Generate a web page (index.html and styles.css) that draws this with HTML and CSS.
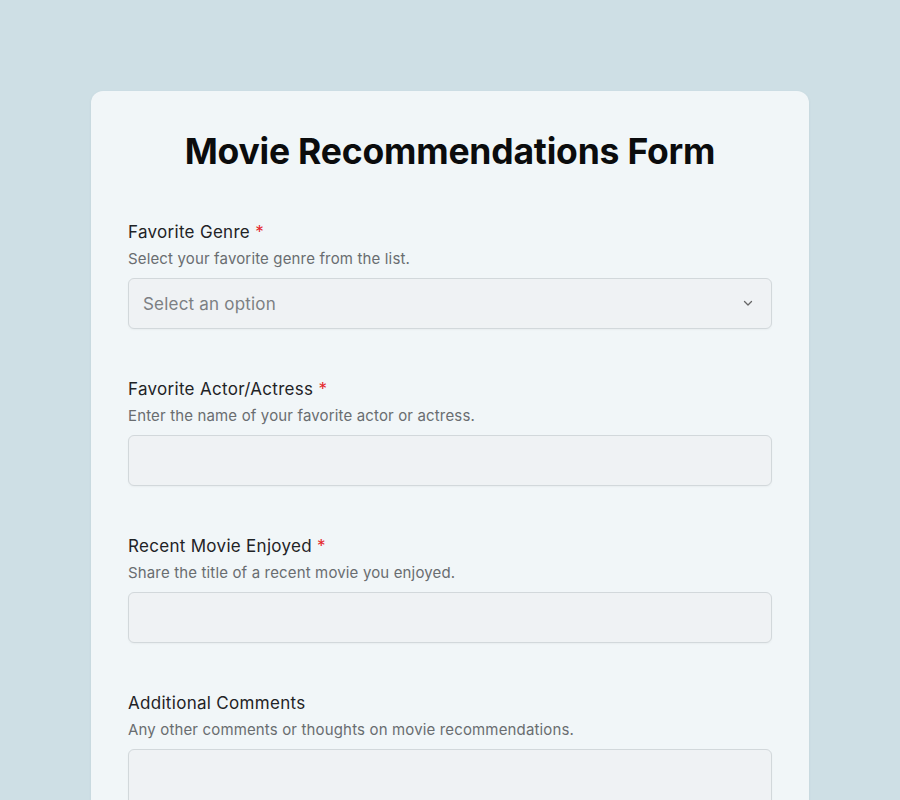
FILE: index.html
```html
<!DOCTYPE html>
<html lang="en">
<head>
  <meta charset="UTF-8" />
  <meta name="viewport" content="width=device-width, initial-scale=1.0"/>
  <title>Movie Recommendations Form</title>
  <link rel="stylesheet" href="styles.css">
</head>
<body>
  <div class="form-card">
    <h1 class="form-title">Movie Recommendations Form</h1>

    <div class="field">
      <label class="field-label" for="genre">Favorite Genre <span class="req">*</span></label>
      <p class="field-help">Select your favorite genre from the list.</p>
      <div class="select-wrap">
        <select id="genre" class="input select">
          <option value="">Select an option</option>
          <option>Action</option>
          <option>Comedy</option>
          <option>Drama</option>
          <option>Horror</option>
          <option>Sci-Fi</option>
        </select>
        <svg class="chevron" width="12" height="12" viewBox="0 0 12 12" fill="none">
          <path d="M2.5 4.5 6 8l3.5-3.5" stroke="#666" stroke-width="1.3" stroke-linecap="round" stroke-linejoin="round"/>
        </svg>
      </div>
    </div>

    <div class="field">
      <label class="field-label" for="actor">Favorite Actor/Actress <span class="req">*</span></label>
      <p class="field-help">Enter the name of your favorite actor or actress.</p>
      <input id="actor" class="input" type="text">
    </div>

    <div class="field">
      <label class="field-label" for="movie">Recent Movie Enjoyed <span class="req">*</span></label>
      <p class="field-help">Share the title of a recent movie you enjoyed.</p>
      <input id="movie" class="input" type="text">
    </div>

    <div class="field">
      <label class="field-label" for="comments">Additional Comments</label>
      <p class="field-help">Any other comments or thoughts on movie recommendations.</p>
      <textarea id="comments" class="input textarea"></textarea>
    </div>
  </div>
</body>
</html>
```

FILE: styles.css
```css
body {
  margin: 0;
  background: #cedfe5;
  font-family: Inter, "Open Sans", sans-serif;
  color: #1f2326;
}

.form-card {
  width: 718px;
  box-sizing: border-box;
  margin: 91px auto 0;
  padding: 34px 37px 40px;
  background: #f1f6f8;
  border-radius: 12px;
  box-shadow: 0 1px 3px rgba(60, 90, 100, 0.08);
}

.form-title {
  margin: 0 0 41px;
  text-align: center;
  font-size: 35.5px;
  font-weight: 700;
  line-height: 54px;
  letter-spacing: -0.2px;
  color: #0b0c0d;
}

.field {
  margin-bottom: 48px;
}

.field-label {
  display: block;
  font-size: 17px;
  line-height: 24px;
  letter-spacing: 0.3px;
  color: #1f2326;
}

.req {
  color: #e5262b;
}

.field-help {
  margin: 4px 0 8px;
  font-size: 15px;
  line-height: 22px;
  letter-spacing: 0.15px;
  color: #696d70;
}

.input {
  display: block;
  width: 100%;
  box-sizing: border-box;
  height: 51px;
  padding: 0 14px;
  background: #eff2f4;
  border: 1px solid #d2d8db;
  border-radius: 6px;
  font-family: inherit;
  font-size: 17px;
  letter-spacing: 0.2px;
  color: #1f2326;
  outline: none;
  box-shadow: 0 1px 2px rgba(0, 0, 0, 0.04);
}

.select-wrap {
  position: relative;
}

.select {
  -webkit-appearance: none;
  appearance: none;
  color: #7c8083;
}

.chevron {
  position: absolute;
  right: 18px;
  top: 19px;
  pointer-events: none;
}

.textarea {
  height: 110px;
  resize: none;
}
```
